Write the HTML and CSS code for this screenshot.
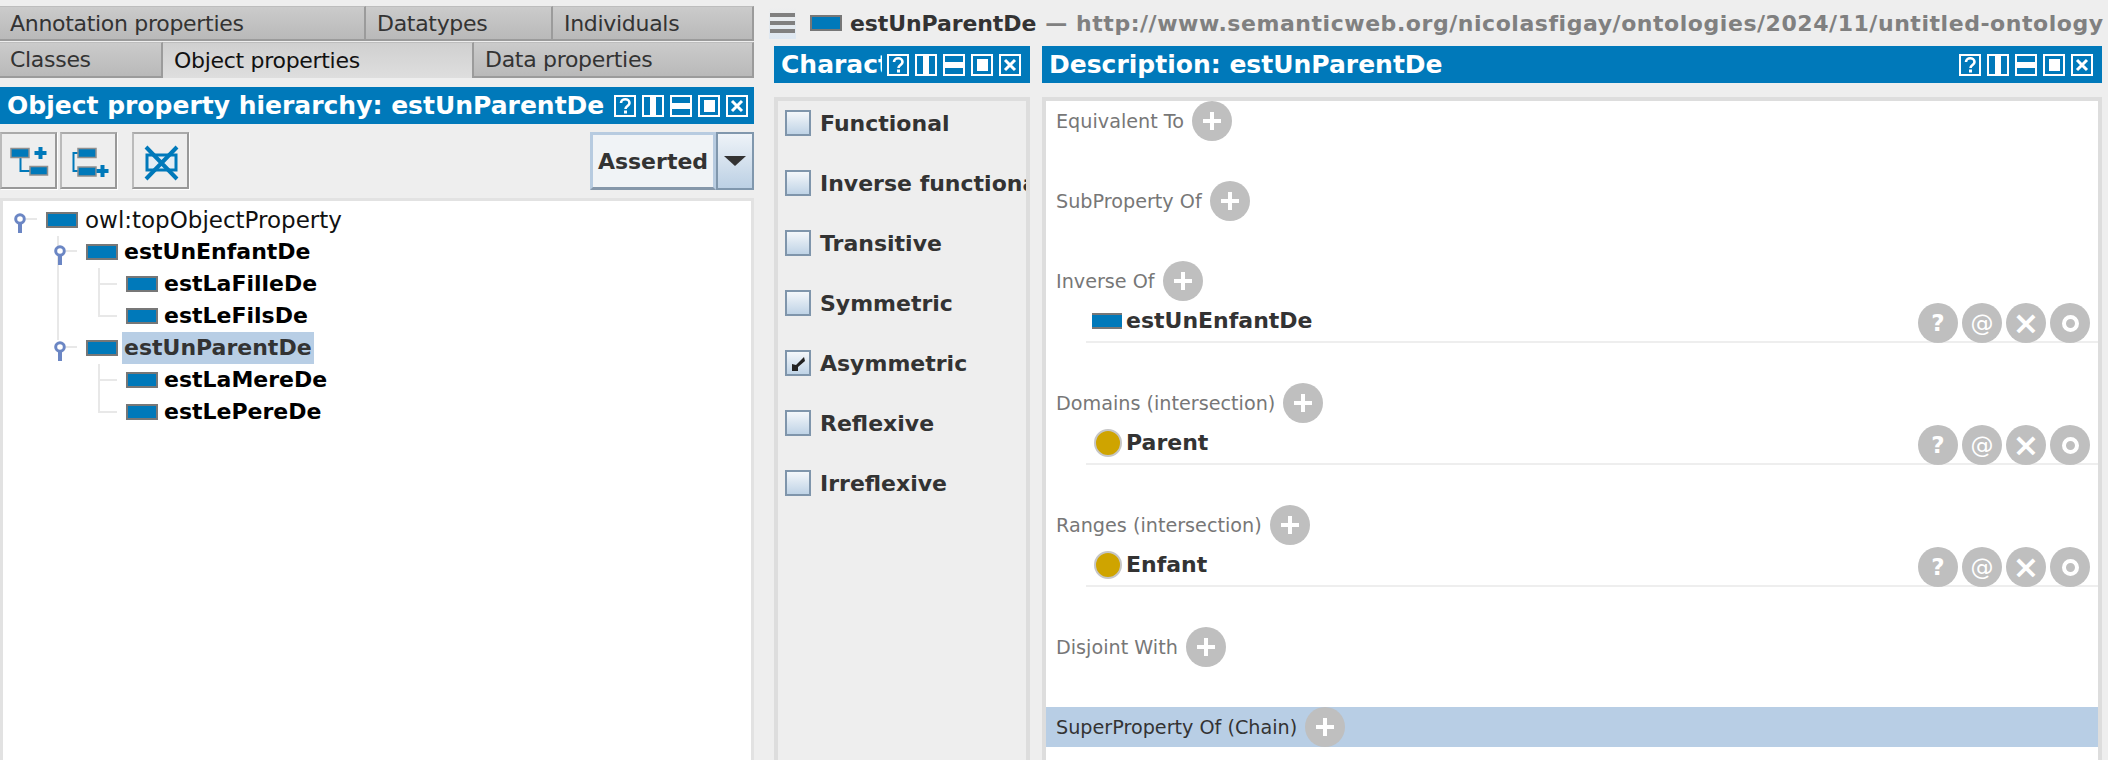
FILE: index.html
```html
<!DOCTYPE html>
<html lang="en">
<head>
    <meta charset="UTF-8">
    <title>Protege - estUnParentDe</title>
    <link rel="stylesheet" href="styles.css">
</head>
<body>
    <svg class="sprites" width="0" height="0">
        <symbol id="btn-split-v" viewBox="0 0 22 22"><rect x="1" y="1" width="20" height="20" fill="none" stroke="#fff" stroke-width="2"/><rect x="8" y="1" width="6" height="20" fill="#fff"/></symbol>
        <symbol id="btn-split-h" viewBox="0 0 22 22"><rect x="1" y="1" width="20" height="20" fill="none" stroke="#fff" stroke-width="2"/><rect x="1" y="8" width="20" height="6" fill="#fff"/></symbol>
        <symbol id="btn-max" viewBox="0 0 22 22"><rect x="1" y="1" width="20" height="20" fill="none" stroke="#fff" stroke-width="2"/><rect x="6" y="5" width="11" height="12" fill="#fff"/></symbol>
        <symbol id="btn-close" viewBox="0 0 22 22"><rect x="1" y="1" width="20" height="20" fill="none" stroke="#fff" stroke-width="2"/><path d="M6 6l10 10M16 6L6 16" stroke="#fff" stroke-width="3"/></symbol>
        <symbol id="btn-help" viewBox="0 0 22 22"><rect x="1" y="1" width="20" height="20" fill="none" stroke="#fff" stroke-width="2"/><path d="M7 8c0-5 8.500-5 8.500 0 0 3-4 3-4 6" fill="none" stroke="#fff" stroke-width="2.600"/><rect x="10" y="15.500" width="3" height="3" fill="#fff"/></symbol>
        <symbol id="handle" viewBox="0 0 12 32"><circle cx="6" cy="15" r="4.300" fill="#fff" stroke="#6b86c4" stroke-width="3"/><rect x="4" y="19" width="4" height="10" fill="#6b86c4"/></symbol>
    </svg>

    <div class="app">
        <div class="left-col">
            <div class="tabs">
                <div class="tab-row">
                    <div class="tab tab-annotation">Annotation properties</div>
                    <div class="tab tab-datatypes">Datatypes</div>
                    <div class="tab tab-fill">Individuals</div>
                </div>
                <div class="tab-row tab-row-low">
                    <div class="tab tab-classes">Classes</div>
                    <div class="tab tab-object active">Object properties</div>
                    <div class="tab tab-fill">Data properties</div>
                </div>
            </div>

            <div class="view-header">
                <span class="view-title">Object property hierarchy: estUnParentDe</span>
                <span class="view-btns">
                    <svg><use href="#btn-help"/></svg><svg><use href="#btn-split-v"/></svg><svg><use href="#btn-split-h"/></svg><svg><use href="#btn-max"/></svg><svg><use href="#btn-close"/></svg>
                </span>
            </div>

            <div class="toolbar">
                <button class="tool">
                    <svg width="40" height="40" viewBox="0 0 40 40">
                        <path d="M11.500 17v13H21" fill="none" stroke="#0079ba" stroke-width="2"/>
                        <rect x="2" y="7.500" width="18" height="9" fill="#0079ba" stroke="#8f8f8f" stroke-width="1.500"/>
                        <rect x="21" y="25.500" width="17.500" height="8.500" fill="#0079ba" stroke="#8f8f8f" stroke-width="1.500"/>
                        <path d="M31.500 6v12M25.500 12h12" stroke="#0079ba" stroke-width="4"/>
                    </svg>
                </button>
                <button class="tool">
                    <svg width="40" height="40" viewBox="0 0 40 40">
                        <path d="M9 12H4.500v18H9" fill="none" stroke="#0079ba" stroke-width="2"/>
                        <rect x="9" y="7.500" width="18" height="9" fill="#0079ba" stroke="#8f8f8f" stroke-width="1.500"/>
                        <rect x="9" y="26" width="18" height="9" fill="#0079ba" stroke="#8f8f8f" stroke-width="1.500"/>
                        <path d="M33.500 24v12M27.500 30h12" stroke="#0079ba" stroke-width="4"/>
                    </svg>
                </button>
                <button class="tool tool-del">
                    <svg width="40" height="40" viewBox="0 0 40 40">
                        <rect x="6" y="14" width="29" height="15" fill="#e4edf4" stroke="#0079ba" stroke-width="3"/>
                        <path d="M5 6l31 32M36 6L5 38" stroke="#0079ba" stroke-width="4"/>
                    </svg>
                </button>
                <div class="combo">
                    <span class="combo-value">Asserted</span>
                    <span class="combo-arrow"></span>
                </div>
            </div>

            <div class="tree">
                <div class="tree-row top">
                    <svg class="handle"><use href="#handle"/></svg><span class="stub"></span>
                    <span class="prop-icon"></span><span class="top-label">owl:topObjectProperty</span>
                </div>
                <ul class="branches">
                    <li class="branch">
                        <div class="tree-row">
                            <svg class="handle"><use href="#handle"/></svg><span class="stub"></span>
                            <span class="prop-icon"></span><span class="prop-label">estUnEnfantDe</span>
                        </div>
                        <div class="tree-row leaf"><span class="elbow more"></span><span class="prop-icon"></span><span class="prop-label">estLaFilleDe</span></div>
                        <div class="tree-row leaf"><span class="elbow"></span><span class="prop-icon"></span><span class="prop-label">estLeFilsDe</span></div>
                    </li>
                    <li class="branch last">
                        <div class="tree-row">
                            <svg class="handle"><use href="#handle"/></svg><span class="stub"></span>
                            <span class="prop-icon"></span><span class="prop-label selected">estUnParentDe</span>
                        </div>
                        <div class="tree-row leaf"><span class="elbow more"></span><span class="prop-icon"></span><span class="prop-label">estLaMereDe</span></div>
                        <div class="tree-row leaf"><span class="elbow"></span><span class="prop-icon"></span><span class="prop-label">estLePereDe</span></div>
                    </li>
                </ul>
            </div>
        </div>

        <div class="right-col">
            <div class="entity-bar">
                <span class="burger"><i></i><i></i><i></i></span>
                <span class="prop-icon"></span>
                <span class="entity-name">estUnParentDe</span>
                <span class="entity-iri">— http://www.semanticweb.org/nicolasfigay/ontologies/2024/11/untitled-ontology</span>
            </div>

            <div class="panes">
                <div class="pane-char">
                    <div class="view-header">
                        <span class="view-title clipped">Characteristics</span>
                        <span class="view-btns">
                            <svg><use href="#btn-help"/></svg><svg><use href="#btn-split-v"/></svg><svg><use href="#btn-split-h"/></svg><svg><use href="#btn-max"/></svg><svg><use href="#btn-close"/></svg>
                        </span>
                    </div>
                    <div class="char-list">
                        <div class="char-row"><span class="check"></span>Functional</div>
                        <div class="char-row"><span class="check"></span>Inverse functional</div>
                        <div class="char-row"><span class="check"></span>Transitive</div>
                        <div class="char-row"><span class="check"></span>Symmetric</div>
                        <div class="char-row">
                            <span class="check">
                                <svg width="22" height="22" viewBox="0 0 22 22"><path d="M5 12l4 1 8-8 1 4-7 6v4H5z" fill="#222"/></svg>
                            </span>Asymmetric
                        </div>
                        <div class="char-row"><span class="check"></span>Reflexive</div>
                        <div class="char-row"><span class="check"></span>Irreflexive</div>
                    </div>
                </div>

                <div class="pane-desc">
                    <div class="view-header">
                        <span class="view-title">Description: estUnParentDe</span>
                        <span class="view-btns">
                            <svg><use href="#btn-help"/></svg><svg><use href="#btn-split-v"/></svg><svg><use href="#btn-split-h"/></svg><svg><use href="#btn-max"/></svg><svg><use href="#btn-close"/></svg>
                        </span>
                    </div>
                    <div class="desc-body">
                        <div class="section">
                            <div class="section-head"><span class="section-label">Equivalent To</span><span class="add"></span></div>
                        </div>
                        <div class="section">
                            <div class="section-head"><span class="section-label">SubProperty Of</span><span class="add"></span></div>
                        </div>
                        <div class="section">
                            <div class="section-head"><span class="section-label">Inverse Of</span><span class="add"></span></div>
                            <div class="item">
                                <span class="prop-icon flat"></span><span class="item-name">estUnEnfantDe</span>
                                <span class="actions"><span class="act">?</span><span class="act act-at">@</span><span class="act act-x">×</span><span class="act"><i class="ring"></i></span></span>
                            </div>
                        </div>
                        <div class="section">
                            <div class="section-head"><span class="section-label">Domains (intersection)</span><span class="add"></span></div>
                            <div class="item">
                                <span class="class-dot"></span><span class="item-name">Parent</span>
                                <span class="actions"><span class="act">?</span><span class="act act-at">@</span><span class="act act-x">×</span><span class="act"><i class="ring"></i></span></span>
                            </div>
                        </div>
                        <div class="section">
                            <div class="section-head"><span class="section-label">Ranges (intersection)</span><span class="add"></span></div>
                            <div class="item">
                                <span class="class-dot"></span><span class="item-name">Enfant</span>
                                <span class="actions"><span class="act">?</span><span class="act act-at">@</span><span class="act act-x">×</span><span class="act"><i class="ring"></i></span></span>
                            </div>
                        </div>
                        <div class="section">
                            <div class="section-head"><span class="section-label">Disjoint With</span><span class="add"></span></div>
                        </div>
                        <div class="section-head band"><span class="section-label">SuperProperty Of (Chain)</span><span class="add"></span></div>
                    </div>
                </div>
            </div>
        </div>
    </div>
</body>
</html>
```

FILE: styles.css
```css
html, body { margin: 0; height: 100%; overflow: hidden; }
body { background-color: #eeeeee; color: #222; font-family: "DejaVu Sans", sans-serif; }
.sprites { display: block; width: 0; height: 0; }
.app { display: flex; height: 760px; }

/* left column */
.left-col { width: 754px; margin-right: 8px; padding-top: 6px; display: flex; flex-direction: column; flex-shrink: 0; }
.tab-row { display: flex; height: 35px; margin-bottom: 1px; }
.tab-row-low { height: 36px; margin-bottom: 0; }
.tab {
    box-sizing: border-box;
    padding: 0 0 0 11px;
    display: flex;
    align-items: center;
    background: linear-gradient(#cbcbcb, #b9b9b9);
    border-top: 1px solid #bdbdbd;
    border-right: 2px solid #9b9b9b;
    border-bottom: 2px solid #9b9b9b;
    font-size: 22px;
    letter-spacing: -0.3px;
    color: #333;
}
.tab-annotation, .tab-classes { padding-left: 10px; }
.tab-annotation { width: 366px; }
.tab-datatypes { width: 187px; }
.tab-classes { width: 163px; }
.tab-object { width: 311px; }
.tab-fill { flex: 1; }
.tab.active { background: linear-gradient(#d0d0d0, #dedede); border-bottom: none; color: #111; }

.view-header {
    height: 37px;
    display: flex;
    align-items: center;
    justify-content: space-between;
    background-color: #0079ba;
    color: #fff;
    padding: 0 9px 0 7px;
}
.left-col .view-header { margin-top: 9px; padding-right: 6px; }
.view-title { font-size: 25px; font-weight: bold; white-space: nowrap; }
.view-title.clipped { width: 101px; overflow: hidden; }
.view-btns { display: flex; gap: 6px; flex-shrink: 0; }
.view-btns svg { width: 22px; height: 22px; display: block; }

.toolbar { display: flex; align-items: flex-start; padding-top: 8px; height: 74px; box-sizing: border-box; }
.tool {
    box-sizing: border-box;
    width: 57px;
    height: 57px;
    padding: 0;
    margin-right: 3px;
    background-color: #eeeeee;
    border: 2px solid #999;
    border-top-color: #aaa;
    border-left-color: #bbb;
    box-shadow: 1px 1px 0 #fff;
    display: flex;
    align-items: center;
    justify-content: center;
}
.tool-del { margin-left: 12px; }
.combo { margin-left: auto; display: flex; height: 58px; }
.combo-value {
    box-sizing: border-box;
    width: 126px;
    display: flex;
    align-items: center;
    justify-content: center;
    font-size: 22px;
    font-weight: bold;
    color: #333;
    background-color: #f0f3f6;
    border: 3px solid #b7cbe0;
    border-bottom-color: #8597aa;
}
.combo-arrow {
    box-sizing: border-box;
    width: 38px;
    background: linear-gradient(#eef3f8, #bcd0e4);
    border: 2px solid #8097ad;
    display: flex;
    align-items: center;
    justify-content: center;
}
.combo-arrow::after { content: ""; border-top: 10px solid #333; border-left: 11px solid transparent; border-right: 11px solid transparent; }

/* tree */
.tree { flex: 1; background-color: #fff; border-left: 3px solid #e2e2e2; border-top: 3px solid #e2e2e2; border-right: 3px solid #e2e2e2; padding-top: 3px; }
.tree-row { display: flex; align-items: center; height: 32px; }
.tree-row.top { padding-left: 11px; }
.branches { list-style: none; margin: 0; padding: 0; }
.branch { margin-left: 54px; border-left: 2px solid #e8e8e8; }
.branch.last { border-left-color: transparent; }
.branch > .tree-row:first-child .handle { margin-left: -5px; }
.branch.last > .tree-row:first-child .handle { background: linear-gradient(#e8e8e8, #e8e8e8) no-repeat 3px 0 / 2px 8px; }
.handle { width: 12px; height: 32px; flex-shrink: 0; }
.stub { width: 11px; height: 2px; background-color: #e8e8e8; margin-right: 9px; margin-top: -2px; }
.leaf { padding-left: 39px; }
.elbow { box-sizing: border-box; width: 19px; height: 17px; margin-right: 9px; align-self: flex-start; border-left: 2px solid #e8e8e8; border-bottom: 2px solid #e8e8e8; }
.elbow.more { height: 32px; border-bottom: none; background: linear-gradient(#e8e8e8, #e8e8e8) no-repeat 0 15px / 100% 2px; }
.prop-icon { box-sizing: border-box; display: inline-block; width: 32px; height: 16px; background-color: #0079ba; border: 2px solid #777; flex-shrink: 0; }
.prop-icon.flat { border-width: 2px 0; width: 30px; }
.top-label { font-size: 23px; margin-left: 7px; color: #111; }
.prop-label { font-size: 22px; font-weight: bold; margin-left: 4px; padding: 0 2px; line-height: 32px; color: #000; }
.prop-label.selected { background-color: #b8cee5; color: #333; }

/* right column */
.right-col { flex: 1; min-width: 0; overflow: hidden; }
.entity-bar { height: 46px; display: flex; align-items: center; padding-left: 7px; white-space: nowrap; overflow: hidden; }
.burger { width: 27px; height: 32px; background: linear-gradient(#eeeeee, #dde7f1); display: flex; flex-direction: column; justify-content: center; gap: 4px; margin-right: 14px; flex-shrink: 0; }
.burger i { display: block; height: 4px; margin: 0 1px; background-color: #808080; }
.entity-name { font-size: 22px; letter-spacing: -0.1px; font-weight: bold; margin-left: 8px; color: #333; }
.entity-iri { font-size: 22px; letter-spacing: 0.55px; font-weight: bold; margin-left: 9px; color: #808080; }

.panes { display: flex; gap: 12px; padding-left: 12px; }
.pane-char { width: 256px; flex-shrink: 0; }
.pane-desc { width: 1060px; flex-shrink: 0; }
.char-list { box-sizing: border-box; height: 668px; margin-top: 14px; border: 4px solid #dddddd; padding: 9px 0 0 7px; overflow: hidden; }
.char-row { display: flex; align-items: center; height: 26px; margin-bottom: 34px; font-size: 22px; font-weight: bold; color: #333; white-space: nowrap; }
.check {
    box-sizing: border-box;
    width: 26px;
    height: 26px;
    margin-right: 9px;
    flex-shrink: 0;
    border: 2px solid #7f95ab;
    background: linear-gradient(#f4f7fa, #bfd3e6);
}
.check svg { display: block; }

.desc-body { box-sizing: border-box; height: 668px; margin-top: 14px; border: 4px solid #dddddd; background-color: #fff; overflow: hidden; }
.section { margin-bottom: 40px; }
.section-head { display: flex; align-items: center; height: 40px; padding-left: 10px; }
.section-label { font-size: 19.2px; color: #777; margin-right: 8px; white-space: nowrap; }
.add {
    width: 40px;
    height: 40px;
    border-radius: 50%;
    flex-shrink: 0;
    background:
        linear-gradient(#fff, #fff) center / 18px 4px no-repeat,
        linear-gradient(#fff, #fff) center / 4px 18px no-repeat,
        #bfbfbf;
}
.band { background-color: #b8cee5; }
.band .section-label { color: #333; }

.item { box-sizing: border-box; display: flex; align-items: center; height: 40px; margin: 2px 0 0 40px; border-bottom: 2px solid #eeeeee; padding: 0 0 3px 6px; }
.item-name { font-size: 22px; font-weight: bold; color: #333; margin-left: 4px; }
.class-dot { box-sizing: border-box; width: 28px; height: 28px; border-radius: 50%; background-color: #cfa400; border: 2px solid #c6c6c6; margin-left: 2px; }
.actions { margin-left: auto; margin-right: 8px; display: flex; gap: 4px; align-self: flex-start; }
.act {
    width: 40px;
    height: 40px;
    border-radius: 50%;
    background-color: #bfbfbf;
    color: #fff;
    font-size: 23px;
    font-weight: bold;
    display: flex;
    align-items: center;
    justify-content: center;
}
.act-at { font-size: 23px; font-weight: normal; }
.act-x { font-size: 32px; }
.ring { box-sizing: border-box; display: block; width: 17px; height: 17px; border: 4px solid #fff; border-radius: 50%; }
```
